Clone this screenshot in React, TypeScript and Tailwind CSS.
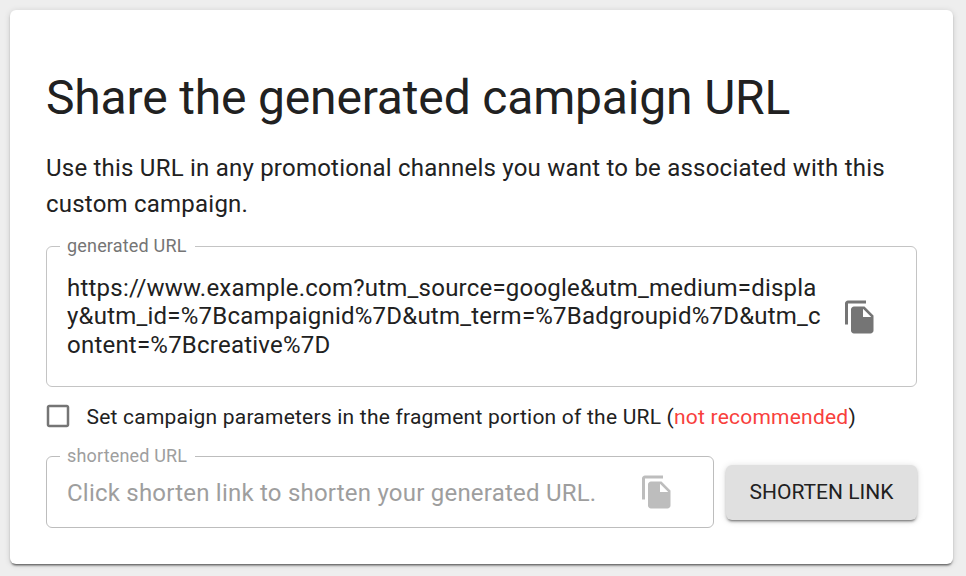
import React from 'react';

function CopyIcon({ className }: { className: string }) {
  return (
    <svg viewBox="0 0 24 24" className={className} fill="currentColor">
      <path d="M16 1H4c-1.100 0-2 .9-2 2v14h2V3h12V1zm-1 4 6 6v10c0 1.100-.9 2-2 2H7.990C6.890 23 6 22.100 6 21l.01-14c0-1.100.89-2 1.990-2h7zm-1 7h5.500L14 6.500V12z" />
    </svg>
  );
}

function CheckboxIcon() {
  return (
    <svg viewBox="0 0 24 24" className="mr-[13px] mb-[2px] -ml-[3px] h-[30px] w-[30px] shrink-0 text-[#757575]" fill="currentColor">
      <path d="M19 5v14H5V5h14m0-2H5c-1.100 0-2 .9-2 2v14c0 1.100.9 2 2 2h14c1.100 0 2-.9 2-2V5c0-1.100-.9-2-2-2z" />
    </svg>
  );
}

export default function App() {
  return (
    <div className="h-[576px] w-[966px] overflow-hidden bg-[#eeeeee] px-[10px] pt-[10px] font-['Roboto',sans-serif] text-[#212121]">
      <main className="h-[554px] w-[943px] rounded-[6px] bg-white px-9 pt-[60px] shadow-[0_3px_2px_-2px_rgba(0,0,0,0.45),0_2px_2px_rgba(0,0,0,0.2),0_1px_6px_rgba(0,0,0,0.14)]">
        <h1 className="h-[80px] whitespace-nowrap text-[48px] leading-[56px] tracking-[-0.17px]">Share the generated campaign URL</h1>
        <p className="h-[86px] text-[24px] leading-[36px] tracking-[0.22px]">
          Use this URL in any promotional channels you want to be associated with this<br />custom campaign.
        </p>
        <fieldset className="h-[151px] w-[871px] rounded-[6px] border border-[#c4c4c4] pl-[13px]">
          <legend className="h-[20px] pl-[7px] pr-[8px] text-[18px] leading-[20px] tracking-[0.18px] text-[#757575]">generated URL</legend>
          <div className="flex pl-[7px] pt-[17px]">
            <p className="w-[775px] whitespace-nowrap pt-[0.5px] text-[24px] leading-[28.5px] tracking-[0.22px]">
              https://www.example.com?utm_source=google&amp;utm_medium=displa<br />y&amp;utm_id=%7Bcampaignid%7D&amp;utm_term=%7Badgroupid%7D&amp;utm_c<br />ontent=%7Bcreative%7D
            </p>
            <CopyIcon className="mt-[26px] h-9 w-9 text-[#757575]" />
          </div>
        </fieldset>
        <label className="flex h-[59px] items-center whitespace-nowrap text-[21px] tracking-[0.22px]">
          <CheckboxIcon />
          <span className="pl-[0.5px] pt-[2px]">Set campaign parameters in the fragment portion of the URL (<span className="text-[#f8403c]">not recommended</span>)</span>
        </label>
        <div className="flex items-start">
          <fieldset className="h-[82px] w-[668px] rounded-[6px] border border-[#bdbdbd] pl-[13px]">
            <legend className="h-[20px] pl-[7px] pr-[8px] text-[18px] leading-[20px] tracking-[0.16px] text-[#9e9e9e]">shortened URL</legend>
            <div className="flex items-center pl-[7px] pt-[8px]">
              <span className="w-[572px] pt-[2px] text-[24px] leading-[34px] tracking-[0.22px] text-[#9e9e9e]">Click shorten link to shorten your generated URL.</span>
              <CopyIcon className="h-9 w-9 text-[#bdbdbd]" />
            </div>
          </fieldset>
          <button className="ml-[12px] mt-[19px] h-[55px] w-[191px] rounded-[6px] bg-[#e0e0e0] text-[21px] tracking-[0.01px] shadow-[0_3px_2px_-2px_rgba(0,0,0,0.35),0_2px_3px_rgba(0,0,0,0.2),0_1px_7px_rgba(0,0,0,0.14)]">SHORTEN LINK</button>
        </div>
      </main>
    </div>
  );
}
